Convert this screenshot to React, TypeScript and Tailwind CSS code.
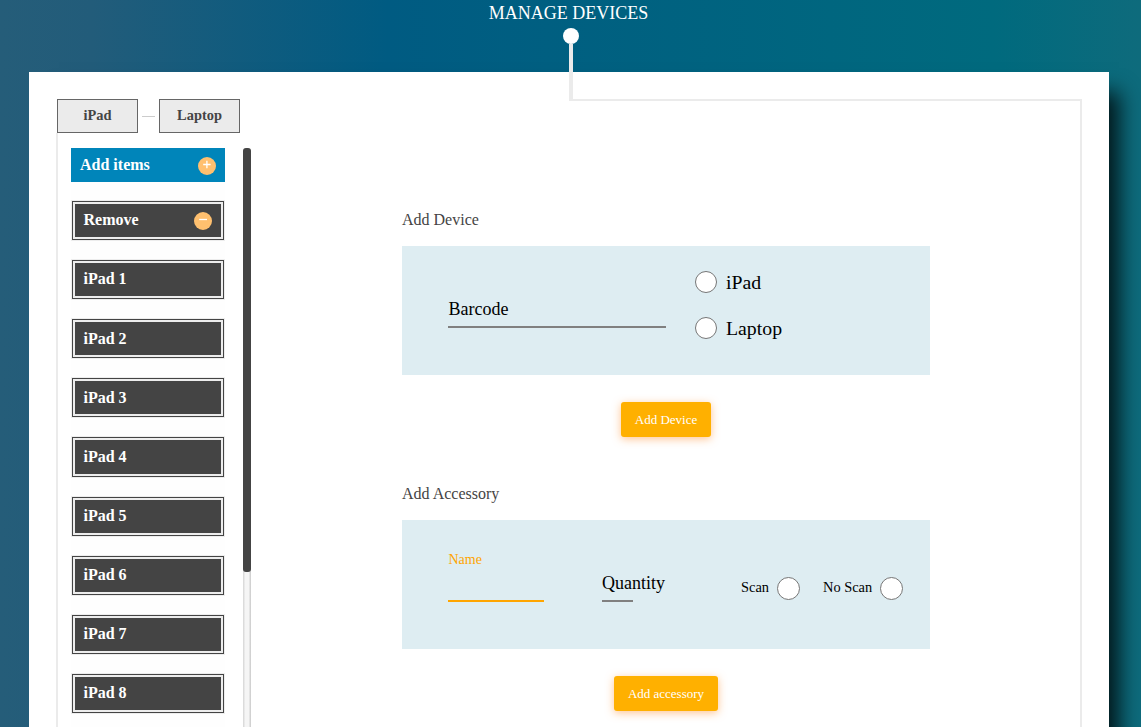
import React from "react";

const devices = ["iPad 1", "iPad 2", "iPad 3", "iPad 4", "iPad 5", "iPad 6", "iPad 7", "iPad 8"];

const itemClass =
  "flex h-[39.15px] w-[152px] shrink-0 items-center justify-between border border-[#444] bg-[#444] pr-[11px] pl-[10.5px] pb-[0.2px] text-base font-bold text-white shadow-[0_0_0_1px_#ededed,inset_0_0_0_2px_#ededed]";

function Badge({ minus = false }: { minus?: boolean }) {
  return (
    <svg viewBox="0 0 18 18" className={`relative h-[18px] w-[18px] ${minus ? "top-[0.5px]" : "top-px"}`}>
      <circle cx="9" cy="9" r="9" fill="#ffc06f" />
      <path d={minus ? "M5.2 7.5h7.8" : "M5.2 7.5h7.4M8.9 3.8v7.4"} stroke="#fff" strokeWidth="1.3" />
    </svg>
  );
}

function Tab({ label }: { label: string }) {
  return (
    <button className="flex h-[34px] w-[81px] items-center justify-center border border-[#666] bg-[#ebebeb] text-[14.4px] font-bold text-[#444]">
      {label}
    </button>
  );
}

function Radio({ className }: { className: string }) {
  return <span className={`shrink-0 rounded-full border border-[#767676] bg-white ${className}`} />;
}

function Submit({ label }: { label: string }) {
  return (
    <button className="mx-auto mt-[27px] flex h-[35px] items-center justify-center rounded-[3px] bg-[#ffb000] px-[13.6px] text-[13px] text-white shadow-[0_2px_8px_rgba(255,140,40,0.5)]">
      {label}
    </button>
  );
}

export default function App() {
  return (
    <div className="flex h-[727px] w-full flex-col overflow-hidden bg-[linear-gradient(to_right,#255d79_0%,#225c7a_8%,#005b82_34%,#006a7e_87%,#0e6b7c_100%)] font-['Liberation_Serif',serif]">
      <header className="relative z-10 flex h-[72px] shrink-0 flex-col items-center">
        <h1 className="h-[28px] pr-1 text-[18px] leading-[27px] text-white">MANAGE DEVICES</h1>
        <span className="h-4 w-4 rounded-full bg-white" />
        <span className="absolute top-[44px] left-[569px] h-[57px] w-1 bg-[#ebebeb]" />
      </header>

      <main className="ml-[29px] flex h-[900px] w-[1080px] shrink-0 bg-white pt-[27px] pl-[27px] shadow-[20px_10px_20px_-10px_rgba(0,0,0,0.8)]">
        <aside className="w-[196px] shrink-0">
          <nav className="flex items-center pl-px">
            <Tab label="iPad" />
            <span className="mx-1 h-px w-[13px] bg-[#ccc]" />
            <Tab label="Laptop" />
          </nav>
          <div className="flex h-[760px] border-l-2 border-[#ebebeb] pt-[15px] pl-[13px]">
            <div className="flex w-[154px] flex-col bg-[#fefefe]">
              <button className="flex h-[34px] w-[154px] shrink-0 items-center justify-between bg-[#0085ba] pr-[9px] pl-[9px] text-base font-bold text-white">
                Add items
                <Badge />
              </button>
              <div className="mt-[18.85px] ml-px flex flex-col gap-5">
                <button className={itemClass}>
                  Remove
                  <Badge minus />
                </button>
                {devices.map((device) => (
                  <button key={device} className={itemClass}>
                    {device}
                  </button>
                ))}
              </div>
            </div>
            <div className="ml-[18px] h-[700px] w-2 rounded-[4px] bg-[linear-gradient(to_right,#d4d4d4,#f5f5f5_30%,#f5f5f5_70%,#c8c8c8)]">
              <div className="h-[424px] w-2 rounded-[3px] bg-[#444]" />
            </div>
          </div>
        </aside>

        <div className="ml-[317px] h-[800px] w-[513px] shrink-0 border-t-2 border-r-2 border-[#ebebeb]">
          <div className="-ml-[167px] w-[528px] pt-[107px]">
            <section className="flex flex-col">
              <h2 className="h-[38px] text-base leading-6 text-[#444]">Add Device</h2>
              <div className="flex h-[129px] bg-[#deedf2] pl-[46px]">
                <div className="mt-[50px] h-[32px] w-[218px] border-b-2 border-[#808080] pl-[0.5px] text-[18px] leading-[27px]">
                  Barcode
                </div>
                <div className="ml-[29px] flex flex-col gap-6 pt-[25px] text-[19.8px] leading-[22px]">
                  <label className="flex items-center gap-[9px]">
                    <Radio className="h-[22px] w-[22px]" />
                    iPad
                  </label>
                  <label className="flex items-center gap-[9px]">
                    <Radio className="h-[22px] w-[22px]" />
                    Laptop
                  </label>
                </div>
              </div>
              <Submit label="Add Device" />
            </section>

            <section className="mt-[45px] flex flex-col">
              <h2 className="h-[38px] text-base leading-6 text-[#444]">Add Accessory</h2>
              <div className="flex h-[129px] bg-[#deedf2] pl-[46px]">
                <div className="mt-[30px] h-[52px] w-[96px] border-b-2 border-[#ffa500] pl-[0.5px] text-[14px] leading-[20px] text-[#ffa500]">
                  Name
                </div>
                <div className="mt-[50px] ml-[58px] h-[32px] w-[31px] border-b-2 border-[#808080] text-[18px] leading-[27px]">
                  Quantity
                </div>
                <div className="mt-[57px] ml-[108px] flex h-[23px] items-center text-[14.4px] leading-[22px] whitespace-nowrap">
                  <label className="flex items-center gap-2">
                    <span className="pb-[3px] leading-5">Scan</span>
                    <Radio className="h-[23px] w-[23px]" />
                  </label>
                  <label className="ml-[23px] flex items-center gap-[7.5px]">
                    <span className="pb-[3px] leading-5">No Scan</span>
                    <Radio className="h-[23px] w-[23px]" />
                  </label>
                </div>
              </div>
              <Submit label="Add accessory" />
            </section>
          </div>
        </div>
      </main>
    </div>
  );
}
